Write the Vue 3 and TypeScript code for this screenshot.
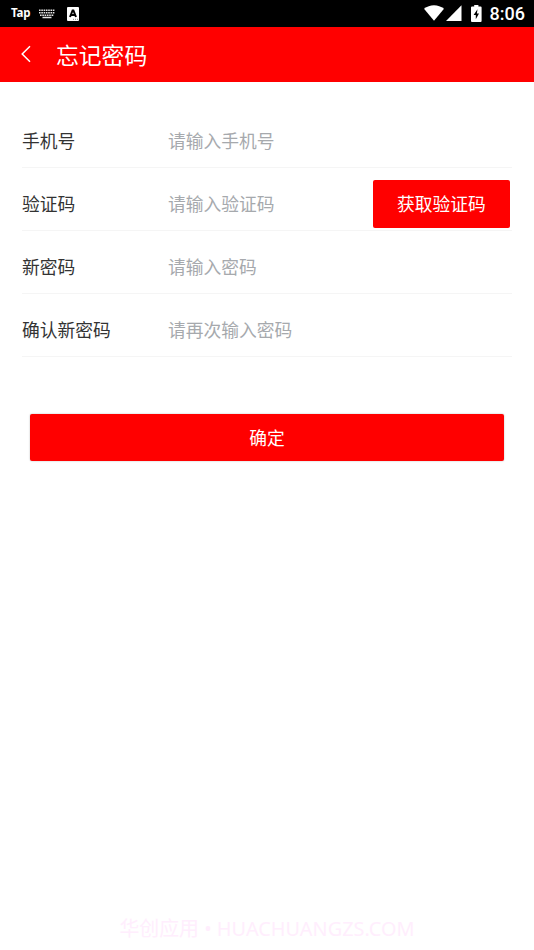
<script setup lang="ts">
import { reactive } from 'vue'

interface Field {
  key: string
  label: string
  placeholder: string
  type: string
  action?: string
}

const fields: Field[] = [
  { key: 'phone', label: '手机号', placeholder: '请输入手机号', type: 'tel' },
  { key: 'code', label: '验证码', placeholder: '请输入验证码', type: 'text', action: '获取验证码' },
  { key: 'password', label: '新密码', placeholder: '请输入密码', type: 'password' },
  { key: 'confirm', label: '确认新密码', placeholder: '请再次输入密码', type: 'password' },
]

const form = reactive<Record<string, string>>({ phone: '', code: '', password: '', confirm: '' })
</script>

<template>
  <div class="screen">
    <div class="status">
      <span class="tap">Tap</span>
      <svg class="keyboard" width="16" height="10" viewBox="0 0 16 10">
        <g stroke="#e4e4e4" stroke-width="1.5" fill="none">
          <path d="M0 1.2H16M0 3.7H16M1 6.2H15" stroke-dasharray="1.6 .7" />
          <path d="M3.5 8.5H12.5" />
        </g>
      </svg>
      <svg class="ime" width="12" height="14" viewBox="0 0 12 14">
        <rect width="12" height="14" rx="1" fill="#fff" />
        <path d="M3 10 5.6 3.4H6.4L9 10M4 7.9H8" fill="none" stroke="#000" stroke-width="2" />
        <path d="M6 12.3H7M8 12.3H9M10 12.3H11" stroke="#555" stroke-width=".7" />
      </svg>
      <div class="system">
        <svg class="wifi" width="20" height="16" viewBox="0 0 20 16">
          <path d="M0 3.8C5.7-.9 14.3-.9 20 3.8L10 15.8Z" fill="#fff" />
        </svg>
        <svg class="signal" width="16" height="16" viewBox="0 0 16 16">
          <path d="M0 16 15.5.2V16Z" fill="#fff" />
        </svg>
        <svg class="battery" width="11" height="17" viewBox="0 0 11 17">
          <path d="M3.2 0H7.4V1.6H9.6Q10.6 1.6 10.6 2.6V16Q10.6 17 9.6 17H1Q0 17 0 16V2.6Q0 1.6 1 1.6H3.2Z" fill="#fff" />
          <path d="M6.5 4.2 2.6 10H4.8V14.3L8 8.6H5.9Z" fill="#000" />
        </svg>
        <span class="time">8:06</span>
      </div>
    </div>

    <header class="header">
      <svg class="back" width="10" height="18" viewBox="0 0 10 18">
        <path d="M9 1.2 1.2 9 9 16.8" fill="none" stroke="#fff" stroke-width="1.5" />
      </svg>
      <h1>忘记密码</h1>
    </header>

    <form class="form" @submit.prevent>
      <label v-for="field in fields" :key="field.key" class="row">
        <span class="label">{{ field.label }}</span>
        <input v-model="form[field.key]" :type="field.type" :placeholder="field.placeholder" />
        <button v-if="field.action" type="button" class="code">{{ field.action }}</button>
      </label>
      <button class="submit" type="submit">确定</button>
    </form>

    <footer class="watermark">华创应用 • HUACHUANGZS.COM</footer>
  </div>
</template>

<style>
body {
  background: #fff;
}
</style>

<style scoped>
.screen {
  display: flex;
  flex-direction: column;
  box-sizing: border-box;
  height: 950px;
  overflow: hidden;
  font-family: "Noto Sans CJK SC", sans-serif;
  font-size: 17.75px;
  color: #333;
}
.status {
  display: flex;
  align-items: center;
  flex: none;
  box-sizing: border-box;
  height: 27px;
  padding: 0 9px 0 11px;
  background: #000;
  color: #fff;
}
.tap {
  width: 28px;
  padding-bottom: 2px;
  font: 700 11.5px/25px "Noto Sans", sans-serif;
  letter-spacing: -.2px;
}
.ime {
  margin-left: 12px;
}
.system {
  display: flex;
  align-items: center;
  margin-left: auto;
}
.wifi,
.signal,
.battery {
  margin-bottom: 1px;
}
.signal {
  margin-left: 1.5px;
}
.battery {
  margin-left: 9px;
}
.time {
  margin-left: 8px;
  font: 500 18px/27px Roboto, sans-serif;
}
.header {
  display: flex;
  align-items: center;
  flex: none;
  box-sizing: border-box;
  height: 55px;
  padding-left: 21px;
  background: #f00;
  color: #fff;
}
.back {
  margin-bottom: 1px;
}
h1 {
  margin: 0 0 0 25px;
  font-size: 22.8px;
  font-weight: 400;
  line-height: 55px;
}
.form {
  padding: 23px 22px 0;
}
.row {
  display: flex;
  align-items: center;
  box-sizing: border-box;
  height: 63px;
  padding-top: 10px;
  padding-right: 2px;
  border-bottom: 1px solid #f5f5f5;
}
.label {
  width: 146px;
  flex: none;
  padding-bottom: 2px;
}
input {
  flex: 1;
  min-width: 0;
  padding: 0 0 2px;
  border: 0;
  outline: 0;
  background: transparent;
  color: #333;
  font: inherit;
}
input::placeholder {
  color: #a6a9ad;
  opacity: 1;
}
button {
  padding: 0 0 2px;
  border: 0;
  border-radius: 2px;
  background: #f00;
  color: #fff;
  font: inherit;
}
.code {
  width: 137px;
  height: 48px;
}
.submit {
  display: block;
  width: 474px;
  height: 47px;
  margin: 57px auto 0;
  box-shadow: 0 0 2px #bbb;
}
.watermark {
  margin-top: auto;
  padding-bottom: 6px;
  color: #ffeefd;
  font-family: "Noto Sans", "Noto Sans CJK SC", sans-serif;
  font-size: 19.9px;
  line-height: 30px;
  text-align: center;
  white-space: nowrap;
}
</style>
